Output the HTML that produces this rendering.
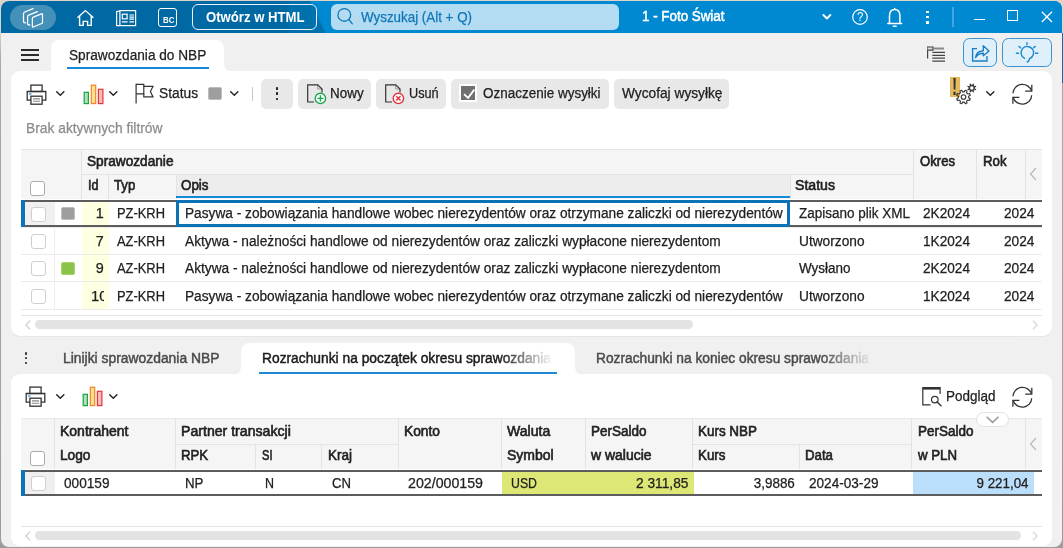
<!DOCTYPE html>
<html lang="pl"><head><meta charset="utf-8"><title>Sprawozdania do NBP</title>
<style>

html,body{margin:0;padding:0}
body{width:1063px;height:548px;overflow:hidden;background:linear-gradient(180deg,#ddd3ca 0,#ddd3ca 30px,#a9a9a9 60px,#9c9c9c 100%);position:relative;font-family:"Liberation Sans",sans-serif;font-size:14px;color:#212121}
.a{position:absolute}
.t{position:absolute;white-space:pre;line-height:20px;height:20px;-webkit-text-stroke:0.25px currentColor}
#win{will-change:transform;position:absolute;left:1px;top:1px;width:1060.5px;height:545.6px;border-radius:8px;background:#f0f0f0;overflow:hidden}
#tb{position:absolute;left:0;top:0;width:1061px;height:32.2px;background:linear-gradient(90deg,#0069a3 0,#0069a3 287px,#0071ad 289px,#0071ad 100%)}
.btn{position:absolute;background:#e8e8e8;border-radius:5px}
.panel{position:absolute;background:#fff}
.cb{position:absolute;width:13px;height:13px;border:1px solid #bdbdbd;border-radius:3px;background:#fff;box-sizing:content-box}
.hl{position:absolute;height:1px;background:#e6e6e6}
.vl{position:absolute;width:1px;background:#e2e2e2}
svg{position:absolute;overflow:visible}

</style></head>
<body>
<div class="a" style="left:1061.5px;top:33px;width:1.5px;height:50px;background:#1a6aa0"></div>
<div id="win"><div class="a" style="left:-1px;top:-1px;width:1063px;height:548px">
<div id="tb" style="left:1px;top:1px"><div class="a" style="left:0;top:0;width:100%;height:100%;background:#0088d1;clip-path:polygon(309px 0,100% 0,100% 100%,324.5px 100%)"></div></div>
<div class="a" style="left:10px;top:5px;width:46px;height:25px;border-radius:13px;background:#4490b9"></div>
<svg style="left:0px;top:0px" width="60" height="34" viewBox="0 0 60 34" fill="none" stroke="#fff" stroke-width="1.25" stroke-linejoin="round" stroke-linecap="round">
<path d="M33.1 8.6 L24.7 12 Q23.5 12.5 23.5 13.8 L23.5 22.1 L25.5 23"/>
<path d="M37.4 11.6 L28.7 15.1 Q27.6 15.6 27.6 16.9 L27.6 24.3 L29.8 25.1"/>
<path d="M32.4 18.3 Q32.4 17.5 33.2 17.2 L41.6 13.8 Q42.5 13.5 42.5 14.4 L42.5 22.4 Q42.5 23.2 41.7 23.5 L33.3 27 Q32.4 27.4 32.4 26.5 Z"/>
</svg>
<svg style="left:76px;top:9px" width="19" height="18" viewBox="0 0 19 18" fill="none" stroke="#fff" stroke-width="1.4" stroke-linejoin="miter">
<path d="M1.4 8.7 L9.4 1.6 L17.4 8.7"/><path d="M3.6 7 V16.4 H7.2 V12.4 H11.6 V16.4 H15.2 V7"/></svg>
<svg style="left:115px;top:9px" width="22" height="18" viewBox="0 0 22 18" fill="none" stroke="#fff" stroke-width="1.2">
<rect x="4.9" y="1.6" width="15.7" height="15"/><path d="M4.9 2 L1.6 2.6 V16.6 H4.9"/>
<rect x="7.3" y="5.2" width="4.8" height="4.6"/><path d="M14.4 6 H19 M14.4 8.1 H19 M14.4 10.1 H19 M6.9 12.9 H12.5 M14.4 12.9 H19" stroke-width="1.1"/></svg>
<div class="a" style="left:158px;top:8px;width:17px;height:17px;border:1.3px solid #fff;border-radius:3px"></div>
<span class="t" style="left:162.60px;transform-origin:0 50%;top:10.10px;font-size:8.5px;color:#fff;font-weight:700;transform:scaleX(0.9282);-webkit-text-stroke:0;">BC</span>
<div class="a" style="left:192px;top:4px;width:123px;height:24px;border:1px solid #e8f2f8;border-radius:6px;background:linear-gradient(90deg,#0069a3 0,#0069a3 95px,#0071ad 97px,#0071ad 100%)"></div>
<span class="t" style="left:206.00px;transform-origin:0 50%;top:7.16px;font-size:14px;color:#fff;font-weight:700;transform:scaleX(0.9381);-webkit-text-stroke:0;">Otwórz w HTML</span>
<div class="a" style="left:331px;top:4px;width:288px;height:26px;border-radius:6px;background:#b3dcf3"></div>
<svg style="left:337px;top:7px" width="18" height="19" viewBox="0 0 18 19" fill="none" stroke="#1077b8" stroke-width="1.3" stroke-linecap="round">
<circle cx="7.3" cy="7.9" r="6.35"/><path d="M11.9 12.5 L15.3 16.8"/></svg>
<span class="t" style="left:361.00px;transform-origin:0 50%;top:7.16px;font-size:14px;color:#1077b8;font-weight:400;transform:scaleX(0.9555);">Wyszukaj (Alt + Q)</span>
<span class="t" style="left:642.00px;transform-origin:0 50%;top:5.76px;font-size:14px;color:#fff;font-weight:400;transform:scaleX(0.9551);-webkit-text-stroke:0.5px #fff;">1 - Foto Świat</span>
<svg style="left:821.5px;top:13px" width="10" height="8" viewBox="0 0 10 8" fill="none" stroke="#fff" stroke-width="1.9" stroke-linecap="round" stroke-linejoin="round"><path d="M1.4 2 L4.9 5.5 L8.4 2"/></svg>
<svg style="left:852px;top:9px" width="16" height="16" viewBox="0 0 16 16" fill="none" stroke="#fff" stroke-width="1.2"><circle cx="8" cy="8" r="7.3"/></svg>
<span class="t" style="left:856.80px;transform-origin:0 50%;top:7.04px;font-size:12.5px;color:#fff;font-weight:400;transform:scaleX(0.9204);-webkit-text-stroke:0;">?</span>
<svg style="left:886.5px;top:7.5px" width="16" height="20" viewBox="0 0 16 20" fill="none" stroke="#fff" stroke-width="1.5" stroke-linejoin="round" stroke-linecap="round">
<path d="M0.8 15.4 H14.6 M2.5 15.4 V8 Q2.5 1.4 7.7 1.4 Q12.9 1.4 12.9 8 V15.4 M7.7 0.5 V1.4"/><path d="M6.3 18.3 H9.1" stroke-width="1.5"/></svg>
<div class="a" style="left:926.2px;top:10.700000000000001px;width:2.6px;height:2.6px;background:#fff;border-radius:0.5px"></div>
<div class="a" style="left:926.2px;top:15.900000000000002px;width:2.6px;height:2.6px;background:#fff;border-radius:0.5px"></div>
<div class="a" style="left:926.2px;top:21.3px;width:2.6px;height:2.6px;background:#fff;border-radius:0.5px"></div>
<div class="a" style="left:952.2px;top:7px;width:1.6px;height:19.5px;background:#45a5dd"></div>
<div class="a" style="left:973.8px;top:18.6px;width:10.8px;height:1.3px;background:#fff"></div>
<div class="a" style="left:1007.3px;top:10px;width:9.2px;height:9px;border:1.3px solid #fff;box-sizing:content-box"></div>
<svg style="left:1041.3px;top:10.5px" width="12" height="12" viewBox="0 0 12 12" stroke="#fff" stroke-width="1.3"><path d="M0.8 0.8 L11 11 M11 0.8 L0.8 11"/></svg>
<div class="a" style="left:20.8px;top:49.1px;width:18px;height:2.1px;background:#2b2b2b"></div>
<div class="a" style="left:20.8px;top:53.8px;width:18px;height:2.1px;background:#2b2b2b"></div>
<div class="a" style="left:20.8px;top:58.7px;width:18px;height:2.1px;background:#2b2b2b"></div>
<svg style="left:0;top:0" width="1063" height="100" viewBox="0 0 1063 100"><path d="M51 80 V49 Q51 39.8 60 39.8 H215 Q224 39.8 224 49 V63 Q224 70.3 230 71.2 V80 Z" fill="#fff"/></svg>
<span class="t" style="left:68.90px;transform-origin:0 50%;top:45.26px;font-size:14px;color:#212121;font-weight:400;transform:scaleX(0.9746);">Sprawozdania do NBP</span>
<div class="a" style="left:67px;top:67px;width:142px;height:2.4px;background:#1488d6"></div>
<svg style="left:927px;top:46px" width="19" height="17" viewBox="0 0 19 17" fill="none" stroke="#444" stroke-width="1.2">
<path d="M0.6 0.4 V12.6"/><path d="M0.6 1 H6 V4.2 H0.6" fill="#ddd"/><path d="M6 2.5 H17" stroke="#8a8a8a" stroke-width="2"/><path d="M5.3 6.4 H18 M5.3 9.3 H18 M5.3 12.2 H18 M5.3 15.1 H18" stroke-width="1.3"/></svg>
<div class="a" style="left:962.8px;top:38.4px;width:32px;height:26.2px;border:1px solid #3a92cf;border-radius:6.5px;background:#e0f0fa"></div>
<svg style="left:0px;top:0px" width="1063" height="70" viewBox="0 0 1063 70" fill="none" stroke="#1a7fc4" stroke-width="1.4" stroke-linejoin="miter">
<path d="M977 48.6 H972.6 V61 H987 V56"/><path d="M975.6 57.6 Q976.2 51.2 983.3 50.8 V45.8 L989 51 L983.3 55.8 V53.3 Q978 53.3 975.6 57.6 Z" stroke-linejoin="round"/></svg>
<div class="a" style="left:1001.8px;top:38.4px;width:48px;height:26.2px;border:1px solid #3a92cf;border-radius:6.5px;background:#e0f0fa"></div>
<svg style="left:0px;top:0px" width="1063" height="70" viewBox="0 0 1063 70" fill="none" stroke="#1a8ad0" stroke-width="1.4" stroke-linecap="round">
<path d="M1029.6 58.6 A6.3 6.3 0 1 0 1024.6 58.4"/><path d="M1029.6 58.6 Q1029.6 60.8 1027.2 62"/><path d="M1016.4 53.2 H1018.6 M1035.6 53.2 H1037.8 M1018.9 46.4 L1020.5 47.8 M1035.2 46.4 L1033.6 47.8 M1027 42.8 V44.6"/></svg>
<div class="panel" style="left:11px;top:71px;width:1041px;height:264.8px;border-radius:9px;box-shadow:0 0.8px 0 #e2e2e2"></div>
<div class="a" style="left:40px;top:71px;width:60px;height:12px;background:#fff"></div>
<svg style="left:25.5px;top:83.5px" width="21" height="21" viewBox="0 0 21 21" fill="none" stroke="#333" stroke-width="1.3" stroke-linejoin="miter">
<rect x="4.9" y="1.1" width="11.2" height="6.4"/><path d="M4.9 16.1 H1.2 V7.5 H19.8 V16.1 H16.1"/>
<rect x="4.9" y="12.2" width="11.2" height="8"/><path d="M7 14.9 H14 M7 17.3 H14" stroke="#888" stroke-width="1.1"/><path d="M3.1 10 H5.3" stroke="#2a8fe0" stroke-width="1.3"/></svg>
<svg style="left:55.8px;top:91.3px" width="8.6" height="5.3" viewBox="0 0 8.6 5.3" fill="none" stroke="#222" stroke-width="1.4" stroke-linecap="round" stroke-linejoin="round"><path d="M0.7 0.7 L4.3 4.3 L7.8999999999999995 0.7"/></svg>
<svg style="left:82.5px;top:83.5px" width="21" height="21" viewBox="0 0 21 21" stroke-width="1.2">
<rect x="1.2" y="8.3" width="4.2" height="11.3" fill="#b4dfb9" stroke="#12a64a"/><rect x="8.3" y="1.2" width="4.4" height="18.4" fill="#fbe08e" stroke="#f0842a"/><rect x="15.4" y="5.3" width="4.5" height="14.3" fill="#f6bcbc" stroke="#e53535"/></svg>
<svg style="left:109.2px;top:91.3px" width="8.6" height="5.3" viewBox="0 0 8.6 5.3" fill="none" stroke="#222" stroke-width="1.4" stroke-linecap="round" stroke-linejoin="round"><path d="M0.7 0.7 L4.3 4.3 L7.8999999999999995 0.7"/></svg>
<svg style="left:135px;top:83px" width="19" height="21" viewBox="0 0 19 21" fill="none" stroke="#333" stroke-width="1.2" stroke-linejoin="miter"><path d="M1.1 0.8 V20.4"/><path d="M1.1 1.3 H8.8 V10.8 H1.1"/><path d="M8.8 3.4 H18 L15.4 8.6 L18 13.9 H8.8 V10.8"/></svg>
<span class="t" style="left:158.90px;transform-origin:0 50%;top:83.16px;font-size:14px;color:#212121;font-weight:400;transform:scaleX(0.9848);">Status</span>
<div class="a" style="left:208px;top:87px;width:12px;height:11px;background:#9e9e9e;border:1px solid #bcbcbc;border-radius:2px"></div>
<svg style="left:229.8px;top:91.3px" width="8.6" height="5.3" viewBox="0 0 8.6 5.3" fill="none" stroke="#222" stroke-width="1.4" stroke-linecap="round" stroke-linejoin="round"><path d="M0.7 0.7 L4.3 4.3 L7.8999999999999995 0.7"/></svg>
<div class="a" style="left:252px;top:86.5px;width:1px;height:14px;background:#c8c8c8"></div>
<div class="btn" style="left:261px;top:79px;width:32px;height:29.7px"></div>
<div class="a" style="left:275.8px;top:87.0px;width:2.5px;height:2.5px;background:#222;border-radius:0.4px"></div>
<div class="a" style="left:275.8px;top:92.39999999999999px;width:2.5px;height:2.5px;background:#222;border-radius:0.4px"></div>
<div class="a" style="left:275.8px;top:97.8px;width:2.5px;height:2.5px;background:#222;border-radius:0.4px"></div>
<div class="btn" style="left:298px;top:79px;width:72.7px;height:29.7px"></div>
<svg style="left:307px;top:84px" width="20" height="21" viewBox="0 0 20 21" fill="none" stroke="#333" stroke-width="1.2" stroke-linejoin="miter">
<path d="M10.7 0.8 V5 H15" stroke="#999" stroke-width="1"/><path d="M7 18 H0.7 V0.8 H10.7 L15 5 V8.5"/><circle cx="13.4" cy="14.4" r="5.2" fill="#fff" stroke="#17a84a" stroke-width="1.4"/><g stroke="#17a84a" stroke-width="1.4"><path d="M13.4 11.3 V17.5 M10.3 14.4 H16.5"/></g></svg>
<span class="t" style="left:330.00px;transform-origin:0 50%;top:83.16px;font-size:14px;color:#212121;font-weight:400;transform:scaleX(0.9596);">Nowy</span>
<div class="btn" style="left:376px;top:79px;width:69.7px;height:29.7px"></div>
<svg style="left:385px;top:84px" width="20" height="21" viewBox="0 0 20 21" fill="none" stroke="#333" stroke-width="1.2" stroke-linejoin="miter">
<path d="M10.7 0.8 V5 H15" stroke="#999" stroke-width="1"/><path d="M7 18 H0.7 V0.8 H10.7 L15 5 V8.5"/><circle cx="13.4" cy="14.4" r="5.2" fill="#fff" stroke="#e8333a" stroke-width="1.4"/><g stroke="#e8333a" stroke-width="1.4"><path d="M11.3 12.3 L15.5 16.5 M15.5 12.3 L11.3 16.5"/></g></svg>
<span class="t" style="left:408.50px;transform-origin:0 50%;top:83.16px;font-size:14px;color:#212121;font-weight:400;transform:scaleX(0.9086);">Usuń</span>
<div class="btn" style="left:451px;top:79px;width:157.6px;height:29.7px"></div>
<div class="a" style="left:459px;top:84px;width:14.4px;height:14.3px;background:#707070;border:2.7px solid #fff"></div>
<svg style="left:462px;top:87px" width="14" height="14" viewBox="0 0 14 14" fill="none" stroke="#fff" stroke-width="1.8"><path d="M2 7.2 L6.1 10.9 L12.3 2.6"/></svg>
<span class="t" style="left:483.10px;transform-origin:0 50%;top:83.16px;font-size:14px;color:#212121;font-weight:400;transform:scaleX(0.9627);">Oznaczenie wysyłki</span>
<div class="btn" style="left:614px;top:79px;width:114.5px;height:29.7px"></div>
<span class="t" style="left:621.50px;transform-origin:0 50%;top:83.16px;font-size:14px;color:#212121;font-weight:400;transform:scaleX(0.9799);">Wycofaj wysyłkę</span>
<div class="a" style="left:950.1px;top:77px;width:10px;height:20px;background:#e5b95c"></div>
<span class="t" style="left:952.35px;transform-origin:0 50%;top:77.26px;font-size:23px;color:#2c3242;font-weight:700;transform:scaleX(0.6713);-webkit-text-stroke:0;">!</span>
<svg style="left:950px;top:77px" width="30" height="30" viewBox="950 77 30 30" fill="none" stroke="#333" stroke-width="1.1" stroke-linejoin="round">
<path d="M968.64 97.80 L970.27 98.78 L969.56 100.50 L967.72 100.05 L966.57 101.20 L967.03 103.04 L965.31 103.76 L964.33 102.13 L962.70 102.14 L961.72 103.77 L960.00 103.06 L960.45 101.22 L959.30 100.07 L957.46 100.53 L956.74 98.81 L958.37 97.83 L958.36 96.20 L956.73 95.22 L957.44 93.50 L959.28 93.95 L960.43 92.80 L959.97 90.96 L961.69 90.24 L962.67 91.87 L964.30 91.86 L965.28 90.23 L967.00 90.94 L966.55 92.78 L967.70 93.93 L969.54 93.47 L970.26 95.19 L968.63 96.17 Z" /><circle cx="963.5" cy="97" r="2.3"/>
<path d="M974.96 88.49 L976.35 89.19 L975.87 90.35 L974.39 89.87 L973.69 90.58 L974.17 92.06 L973.02 92.54 L972.31 91.16 L971.31 91.16 L970.61 92.55 L969.45 92.07 L969.93 90.59 L969.22 89.89 L967.74 90.37 L967.26 89.22 L968.64 88.51 L968.64 87.51 L967.25 86.81 L967.73 85.65 L969.21 86.13 L969.91 85.42 L969.43 83.94 L970.58 83.46 L971.29 84.84 L972.29 84.84 L972.99 83.45 L974.15 83.93 L973.67 85.41 L974.38 86.11 L975.86 85.63 L976.34 86.78 L974.96 87.49 Z" fill="#3a3a3a" stroke="none"/><circle cx="971.8" cy="88" r="1.75" fill="#fff" stroke="none"/></svg>
<svg style="left:986.3px;top:91.3px" width="8.6" height="5.3" viewBox="0 0 8.6 5.3" fill="none" stroke="#222" stroke-width="1.4" stroke-linecap="round" stroke-linejoin="round"><path d="M0.7 0.7 L4.3 4.3 L7.8999999999999995 0.7"/></svg>
<svg style="left:1011.6px;top:83.6px" width="21" height="21" viewBox="0 0 21 21" fill="none" stroke="#333" stroke-width="1.3" stroke-linecap="butt" stroke-linejoin="miter">
<g transform="translate(0.2 0.35) scale(0.985 0.965)"><path d="M0.8 9.3 A9.6 9.6 0 0 1 19.6 6.9"/><path d="M19.9 0.5 V7 H13.2"/><path d="M19.8 11.2 A9.6 9.6 0 0 1 1 13.6"/><path d="M0.7 20 V13.5 H7.3"/></g></svg>
<span class="t" style="left:26.00px;transform-origin:0 50%;top:118.16px;font-size:14px;color:#8c8c8c;font-weight:400;transform:scaleX(0.9857);">Brak aktywnych filtrów</span>
<div class="a" style="left:21px;top:149px;width:1021px;height:49.5px;background:#f5f5f5"></div>
<div class="a" style="left:175.5px;top:174px;width:614.5px;height:24px;background:#ededed"></div>
<div class="hl" style="left:21px;top:149px;width:1021px"></div>
<div class="hl" style="left:81px;top:174px;width:832px;background:#e4e4e4"></div>
<div class="vl" style="left:81px;top:149px;height:49.5px"></div>
<div class="vl" style="left:108.2px;top:174px;height:24.5px"></div>
<div class="vl" style="left:175.5px;top:174px;height:24.5px"></div>
<div class="vl" style="left:790px;top:174px;height:24.5px"></div>
<div class="vl" style="left:913px;top:149px;height:49.5px"></div>
<div class="vl" style="left:976.2px;top:149px;height:49.5px"></div>
<div class="vl" style="left:1025px;top:149px;height:49.5px"></div>
<span class="t" style="left:87.00px;transform-origin:0 50%;top:151.16px;font-size:14px;color:#212121;font-weight:400;transform:scaleX(0.9748);-webkit-text-stroke:0.6px #212121;">Sprawozdanie</span>
<span class="t" style="left:919.50px;transform-origin:0 50%;top:151.16px;font-size:14px;color:#212121;font-weight:400;transform:scaleX(0.9372);-webkit-text-stroke:0.6px #212121;">Okres</span>
<span class="t" style="left:982.50px;transform-origin:0 50%;top:151.16px;font-size:14px;color:#212121;font-weight:400;transform:scaleX(0.9435);-webkit-text-stroke:0.6px #212121;">Rok</span>
<span class="t" style="left:87.50px;transform-origin:0 50%;top:175.16px;font-size:14px;color:#212121;font-weight:400;transform:scaleX(0.8984);-webkit-text-stroke:0.6px #212121;">Id</span>
<span class="t" style="left:113.80px;transform-origin:0 50%;top:175.16px;font-size:14px;color:#212121;font-weight:400;transform:scaleX(0.9390);-webkit-text-stroke:0.6px #212121;">Typ</span>
<span class="t" style="left:181.00px;transform-origin:0 50%;top:175.16px;font-size:14px;color:#212121;font-weight:400;transform:scaleX(0.9550);-webkit-text-stroke:0.6px #212121;">Opis</span>
<span class="t" style="left:795.00px;transform-origin:0 50%;top:175.16px;font-size:14px;color:#212121;font-weight:400;transform:scaleX(1.0075);-webkit-text-stroke:0.6px #212121;">Status</span>
<div class="cb" style="left:29.7px;top:181.3px;border-color:#ababab"></div>
<div class="a" style="left:176px;top:196.3px;width:614px;height:1.8px;background:#128ad6"></div>
<svg style="left:1029px;top:167px" width="8" height="14" viewBox="0 0 8 14" fill="none" stroke="#b8b8b8" stroke-width="1.2"><path d="M7 1 L1.5 7 L7 13"/></svg>
<div class="a" style="left:81.5px;top:200.0px;width:27px;height:26.5px;background:#ffffe1"></div>
<div class="hl" style="left:21px;top:226.5px;width:1021px;background:#ebebeb"></div>
<div class="vl" style="left:53.8px;top:199.5px;height:27.5px;background:#eeeeee"></div>
<div class="a" style="left:24.5px;top:201.5px;width:30px;height:23.5px;background:#f0f0f0"></div>
<div class="cb" style="left:31px;top:206.55px;border-color:#cfcfcf"></div>
<div class="a" style="left:61px;top:206.95000000000002px;width:12px;height:11.5px;background:#9e9e9e;border:1px solid #bdbdbd;border-radius:2px"></div>
<span class="t" style="right:959.00px;transform-origin:100% 50%;top:203.31px;font-size:14px;color:#212121;font-weight:400;transform:scaleX(1.0261);">1</span>
<span class="t" style="left:117.00px;transform-origin:0 50%;top:203.31px;font-size:14px;color:#212121;font-weight:400;transform:scaleX(0.9209);">PZ-KRH</span>
<span class="t" style="left:185.30px;transform-origin:0 50%;top:203.31px;font-size:14px;color:#212121;font-weight:400;transform:scaleX(0.9772);">Pasywa - zobowiązania handlowe wobec nierezydentów oraz otrzymane zaliczki od nierezydentów</span>
<span class="t" style="left:799.00px;transform-origin:0 50%;top:203.31px;font-size:14px;color:#212121;font-weight:400;transform:scaleX(0.9638);">Zapisano plik XML</span>
<span class="t" style="left:923.00px;transform-origin:0 50%;top:203.31px;font-size:14px;color:#212121;font-weight:400;transform:scaleX(0.9735);">2K2024</span>
<span class="t" style="left:1004.00px;transform-origin:0 50%;top:203.31px;font-size:14px;color:#212121;font-weight:400;transform:scaleX(0.9789);">2024</span>
<div class="a" style="left:81.5px;top:227.5px;width:27px;height:26.30000000000001px;background:#ffffe1"></div>
<div class="hl" style="left:21px;top:253.8px;width:1021px;background:#ebebeb"></div>
<div class="vl" style="left:53.8px;top:227px;height:27.30000000000001px;background:#eeeeee"></div>
<div class="cb" style="left:31px;top:233.95000000000002px;border-color:#cfcfcf"></div>
<span class="t" style="right:959.00px;transform-origin:100% 50%;top:230.71px;font-size:14px;color:#212121;font-weight:400;transform:scaleX(1.0261);">7</span>
<span class="t" style="left:117.00px;transform-origin:0 50%;top:230.71px;font-size:14px;color:#212121;font-weight:400;transform:scaleX(0.9209);">AZ-KRH</span>
<span class="t" style="left:185.30px;transform-origin:0 50%;top:230.71px;font-size:14px;color:#212121;font-weight:400;transform:scaleX(0.9792);">Aktywa - należności handlowe od nierezydentów oraz zaliczki wypłacone nierezydentom</span>
<span class="t" style="left:799.00px;transform-origin:0 50%;top:230.71px;font-size:14px;color:#212121;font-weight:400;transform:scaleX(0.9788);">Utworzono</span>
<span class="t" style="left:923.00px;transform-origin:0 50%;top:230.71px;font-size:14px;color:#212121;font-weight:400;transform:scaleX(0.9735);">1K2024</span>
<span class="t" style="left:1004.00px;transform-origin:0 50%;top:230.71px;font-size:14px;color:#212121;font-weight:400;transform:scaleX(0.9789);">2024</span>
<div class="a" style="left:81.5px;top:254.8px;width:27px;height:26.599999999999966px;background:#ffffe1"></div>
<div class="hl" style="left:21px;top:281.4px;width:1021px;background:#ebebeb"></div>
<div class="vl" style="left:53.8px;top:254.3px;height:27.599999999999966px;background:#eeeeee"></div>
<div class="cb" style="left:31px;top:261.4px;border-color:#cfcfcf"></div>
<div class="a" style="left:61px;top:261.8px;width:12px;height:11.5px;background:#8bc34a;border:1px solid #a5d36e;border-radius:2px"></div>
<span class="t" style="right:959.00px;transform-origin:100% 50%;top:258.16px;font-size:14px;color:#212121;font-weight:400;transform:scaleX(1.0261);">9</span>
<span class="t" style="left:117.00px;transform-origin:0 50%;top:258.16px;font-size:14px;color:#212121;font-weight:400;transform:scaleX(0.9209);">AZ-KRH</span>
<span class="t" style="left:185.30px;transform-origin:0 50%;top:258.16px;font-size:14px;color:#212121;font-weight:400;transform:scaleX(0.9792);">Aktywa - należności handlowe od nierezydentów oraz zaliczki wypłacone nierezydentom</span>
<span class="t" style="left:799.00px;transform-origin:0 50%;top:258.16px;font-size:14px;color:#212121;font-weight:400;transform:scaleX(0.9615);">Wysłano</span>
<span class="t" style="left:923.00px;transform-origin:0 50%;top:258.16px;font-size:14px;color:#212121;font-weight:400;transform:scaleX(0.9735);">2K2024</span>
<span class="t" style="left:1004.00px;transform-origin:0 50%;top:258.16px;font-size:14px;color:#212121;font-weight:400;transform:scaleX(0.9789);">2024</span>
<div class="a" style="left:81.5px;top:282.4px;width:27px;height:26.5px;background:#ffffe1"></div>
<div class="hl" style="left:21px;top:308.9px;width:1021px;background:#ebebeb"></div>
<div class="vl" style="left:53.8px;top:281.9px;height:27.5px;background:#eeeeee"></div>
<div class="cb" style="left:31px;top:289.24999999999994px;border-color:#cfcfcf"></div>
<div class="a" style="left:81px;top:281.9px;width:22.7px;height:26.5px;overflow:hidden"><span class="t" style="left:9.50px;transform-origin:0 50%;top:4.11px;font-size:14px;color:#212121;font-weight:400;transform:scaleX(1.0592);">10</span></div>
<span class="t" style="left:117.00px;transform-origin:0 50%;top:286.01px;font-size:14px;color:#212121;font-weight:400;transform:scaleX(0.9209);">PZ-KRH</span>
<span class="t" style="left:185.30px;transform-origin:0 50%;top:286.01px;font-size:14px;color:#212121;font-weight:400;transform:scaleX(0.9772);">Pasywa - zobowiązania handlowe wobec nierezydentów oraz otrzymane zaliczki od nierezydentów</span>
<span class="t" style="left:799.00px;transform-origin:0 50%;top:286.01px;font-size:14px;color:#212121;font-weight:400;transform:scaleX(0.9788);">Utworzono</span>
<span class="t" style="left:923.00px;transform-origin:0 50%;top:286.01px;font-size:14px;color:#212121;font-weight:400;transform:scaleX(0.9735);">1K2024</span>
<span class="t" style="left:1004.00px;transform-origin:0 50%;top:286.01px;font-size:14px;color:#212121;font-weight:400;transform:scaleX(0.9789);">2024</span>
<div class="a" style="left:21px;top:199.8px;width:1021px;height:2px;background:#5c5c5c"></div>
<div class="a" style="left:21px;top:224.8px;width:1021px;height:2px;background:#5c5c5c"></div>
<div class="a" style="left:21px;top:199.8px;width:3.6px;height:27px;background:#0c73b8"></div>
<div class="a" style="left:176px;top:200px;width:614px;height:27px;border:3.9px solid #0a72b5;box-sizing:border-box"></div>
<div class="hl" style="left:21px;top:314.7px;width:1021px;background:#e4e4e4"></div>
<div class="a" style="left:35px;top:319.9px;width:658px;height:8.7px;border-radius:4.4px;background:#e3e3e3"></div>
<svg style="left:25px;top:319.5px" width="6" height="10" viewBox="0 0 6 10" fill="none" stroke="#d2d2d2" stroke-width="1.4"><path d="M5 0.8 L1 5 L5 9.2"/></svg>
<svg style="left:1032px;top:319.5px" width="6" height="10" viewBox="0 0 6 10" fill="none" stroke="#dadada" stroke-width="1.4"><path d="M1 0.8 L5 5 L1 9.2"/></svg>
<div class="a" style="left:24.7px;top:352.0px;width:2.6px;height:2.6px;background:#444;border-radius:0.5px"></div>
<div class="a" style="left:24.7px;top:356.9px;width:2.6px;height:2.6px;background:#444;border-radius:0.5px"></div>
<div class="a" style="left:24.7px;top:361.8px;width:2.6px;height:2.6px;background:#444;border-radius:0.5px"></div>
<span class="t" style="left:63.00px;transform-origin:0 50%;top:348.16px;font-size:14px;color:#4a4a4a;font-weight:400;transform:scaleX(0.9907);-webkit-text-stroke:0.45px #4a4a4a;">Linijki sprawozdania NBP</span>
<svg style="left:0;top:0" width="1063" height="548" viewBox="0 0 1063 548"><path d="M235.5 374.5 Q241 373.5 241 366 V352 Q241 343 250 343 H566 Q575 343 575 352 V366 Q575 373.5 580.5 374.5 V380 H235.5 Z" fill="#fff"/></svg>
<span class="t" style="left:262.00px;transform-origin:0 50%;top:348.16px;font-size:14px;color:#1a1a1a;font-weight:400;transform:scaleX(0.9850);-webkit-text-stroke:0.45px #1a1a1a;">Rozrachunki na początek okresu sprawozdania</span>
<div class="a" style="left:500px;top:345px;width:60px;height:26px;background:linear-gradient(90deg,rgba(255,255,255,0),rgba(255,255,255,0.95) 85%)"></div>
<div class="a" style="left:259px;top:372px;width:298px;height:2px;background:#1e88d2"></div>
<span class="t" style="left:596.00px;transform-origin:0 50%;top:348.16px;font-size:14px;color:#4a4a4a;font-weight:400;transform:scaleX(0.9826);-webkit-text-stroke:0.45px #4a4a4a;">Rozrachunki na koniec okresu sprawozdania</span>
<div class="a" style="left:820px;top:345px;width:60px;height:26px;background:linear-gradient(90deg,rgba(240,240,240,0),rgba(240,240,240,0.95) 85%)"></div>
<div class="panel" style="left:11px;top:373.8px;width:1041px;height:172px;border-radius:9px"></div>
<div class="a" style="left:230px;top:374px;width:60px;height:12px;background:#fff"></div>
<svg style="left:25.2px;top:386.2px" width="21" height="21" viewBox="0 0 21 21" fill="none" stroke="#333" stroke-width="1.3" stroke-linejoin="miter">
<rect x="4.9" y="1.1" width="11.2" height="6.4"/><path d="M4.9 16.1 H1.2 V7.5 H19.8 V16.1 H16.1"/>
<rect x="4.9" y="12.2" width="11.2" height="8"/><path d="M7 14.9 H14 M7 17.3 H14" stroke="#888" stroke-width="1.1"/><path d="M3.1 10 H5.3" stroke="#2a8fe0" stroke-width="1.3"/></svg>
<svg style="left:55.8px;top:394.3px" width="8.6" height="5.3" viewBox="0 0 8.6 5.3" fill="none" stroke="#222" stroke-width="1.4" stroke-linecap="round" stroke-linejoin="round"><path d="M0.7 0.7 L4.3 4.3 L7.8999999999999995 0.7"/></svg>
<svg style="left:82px;top:386.2px" width="21" height="21" viewBox="0 0 21 21" stroke-width="1.2">
<rect x="1.2" y="8.3" width="4.2" height="11.3" fill="#b4dfb9" stroke="#12a64a"/><rect x="8.3" y="1.2" width="4.4" height="18.4" fill="#fbe08e" stroke="#f0842a"/><rect x="15.4" y="5.3" width="4.5" height="14.3" fill="#f6bcbc" stroke="#e53535"/></svg>
<svg style="left:109.2px;top:394.3px" width="8.6" height="5.3" viewBox="0 0 8.6 5.3" fill="none" stroke="#222" stroke-width="1.4" stroke-linecap="round" stroke-linejoin="round"><path d="M0.7 0.7 L4.3 4.3 L7.8999999999999995 0.7"/></svg>
<svg style="left:922px;top:387px" width="21" height="21" viewBox="0 0 21 21" fill="none" stroke="#333" stroke-width="1.2"><path d="M8.5 17.9 H0.8 V0.6 H18.1 V7"/><path d="M0.8 1.5 H18.1" stroke-width="2.2"/><circle cx="12.8" cy="12.6" r="3.3"/><path d="M15.2 15 L19 18.8" stroke-linecap="round" stroke-width="1.4"/></svg>
<span class="t" style="left:946.00px;transform-origin:0 50%;top:386.46px;font-size:14px;color:#212121;font-weight:400;transform:scaleX(0.9632);">Podgląd</span>
<svg style="left:1011.7px;top:386.8px" width="21" height="21" viewBox="0 0 21 21" fill="none" stroke="#333" stroke-width="1.3" stroke-linecap="butt" stroke-linejoin="miter">
<g transform="translate(0.2 0.35) scale(0.985 0.965)"><path d="M0.8 9.3 A9.6 9.6 0 0 1 19.6 6.9"/><path d="M19.9 0.5 V7 H13.2"/><path d="M19.8 11.2 A9.6 9.6 0 0 1 1 13.6"/><path d="M0.7 20 V13.5 H7.3"/></g></svg>
<div class="a" style="left:21px;top:418px;width:1021px;height:50.6px;background:#f5f5f5"></div>
<div class="hl" style="left:21px;top:418px;width:1021px"></div>
<div class="hl" style="left:175.3px;top:444px;width:223px;background:#e4e4e4"></div>
<div class="hl" style="left:692px;top:444px;width:219px;background:#e4e4e4"></div>
<div class="vl" style="left:54.3px;top:418px;height:50.60000000000002px"></div>
<div class="vl" style="left:175.3px;top:418px;height:50.60000000000002px"></div>
<div class="vl" style="left:255px;top:444px;height:24.600000000000023px"></div>
<div class="vl" style="left:321.2px;top:444px;height:24.600000000000023px"></div>
<div class="vl" style="left:398px;top:418px;height:50.60000000000002px"></div>
<div class="vl" style="left:501.2px;top:418px;height:50.60000000000002px"></div>
<div class="vl" style="left:585px;top:418px;height:50.60000000000002px"></div>
<div class="vl" style="left:692px;top:418px;height:50.60000000000002px"></div>
<div class="vl" style="left:799px;top:444px;height:24.600000000000023px"></div>
<div class="vl" style="left:911.3px;top:418px;height:50.60000000000002px"></div>
<div class="vl" style="left:1025px;top:418px;height:50.60000000000002px"></div>
<span class="t" style="left:60.00px;transform-origin:0 50%;top:421.16px;font-size:14px;color:#212121;font-weight:400;transform:scaleX(1.0000);-webkit-text-stroke:0.6px #212121;">Kontrahent</span>
<span class="t" style="left:180.80px;transform-origin:0 50%;top:421.16px;font-size:14px;color:#212121;font-weight:400;transform:scaleX(1.0079);-webkit-text-stroke:0.6px #212121;">Partner transakcji</span>
<span class="t" style="left:404.00px;transform-origin:0 50%;top:421.16px;font-size:14px;color:#212121;font-weight:400;transform:scaleX(0.9838);-webkit-text-stroke:0.6px #212121;">Konto</span>
<span class="t" style="left:506.80px;transform-origin:0 50%;top:421.16px;font-size:14px;color:#212121;font-weight:400;transform:scaleX(1.0032);-webkit-text-stroke:0.6px #212121;">Waluta</span>
<span class="t" style="left:591.00px;transform-origin:0 50%;top:421.16px;font-size:14px;color:#212121;font-weight:400;transform:scaleX(0.9636);-webkit-text-stroke:0.6px #212121;">PerSaldo</span>
<span class="t" style="left:698.00px;transform-origin:0 50%;top:421.16px;font-size:14px;color:#212121;font-weight:400;transform:scaleX(0.9598);-webkit-text-stroke:0.6px #212121;">Kurs NBP</span>
<span class="t" style="left:918.00px;transform-origin:0 50%;top:421.16px;font-size:14px;color:#212121;font-weight:400;transform:scaleX(0.9636);-webkit-text-stroke:0.6px #212121;">PerSaldo</span>
<span class="t" style="left:60.00px;transform-origin:0 50%;top:444.76px;font-size:14px;color:#212121;font-weight:400;transform:scaleX(0.9789);-webkit-text-stroke:0.6px #212121;">Logo</span>
<span class="t" style="left:180.80px;transform-origin:0 50%;top:444.76px;font-size:14px;color:#212121;font-weight:400;transform:scaleX(0.9445);-webkit-text-stroke:0.6px #212121;">RPK</span>
<span class="t" style="left:261.50px;transform-origin:0 50%;top:444.76px;font-size:14px;color:#212121;font-weight:400;transform:scaleX(0.7934);-webkit-text-stroke:0.6px #212121;">SI</span>
<span class="t" style="left:327.50px;transform-origin:0 50%;top:444.76px;font-size:14px;color:#212121;font-weight:400;transform:scaleX(0.9636);-webkit-text-stroke:0.6px #212121;">Kraj</span>
<span class="t" style="left:506.80px;transform-origin:0 50%;top:444.76px;font-size:14px;color:#212121;font-weight:400;transform:scaleX(1.0003);-webkit-text-stroke:0.6px #212121;">Symbol</span>
<span class="t" style="left:591.00px;transform-origin:0 50%;top:444.76px;font-size:14px;color:#212121;font-weight:400;transform:scaleX(0.9967);-webkit-text-stroke:0.6px #212121;">w walucie</span>
<span class="t" style="left:698.00px;transform-origin:0 50%;top:444.76px;font-size:14px;color:#212121;font-weight:400;transform:scaleX(0.9550);-webkit-text-stroke:0.6px #212121;">Kurs</span>
<span class="t" style="left:805.00px;transform-origin:0 50%;top:444.76px;font-size:14px;color:#212121;font-weight:400;transform:scaleX(0.9466);-webkit-text-stroke:0.6px #212121;">Data</span>
<span class="t" style="left:918.00px;transform-origin:0 50%;top:444.76px;font-size:14px;color:#212121;font-weight:400;transform:scaleX(0.9458);-webkit-text-stroke:0.6px #212121;">w PLN</span>
<div class="cb" style="left:29.8px;top:450.6px;border-color:#ababab"></div>
<svg style="left:1029px;top:437px" width="8" height="14" viewBox="0 0 8 14" fill="none" stroke="#b8b8b8" stroke-width="1.2"><path d="M7 1 L1.5 7 L7 13"/></svg>
<div class="a" style="left:976.3px;top:412.2px;width:31px;height:13px;border:1px solid #e2e2e2;border-radius:8px;background:#fff"></div>
<svg style="left:985.9px;top:416.3px" width="14" height="8" viewBox="0 0 14 8" fill="none" stroke="#9a9a9a" stroke-width="1.5"><path d="M0.6 0.8 L6.6 6.4 L12.6 0.8"/></svg>
<div class="a" style="left:24.5px;top:471.5px;width:30px;height:23px;background:#efefef"></div>
<div class="a" style="left:501.7px;top:471px;width:192.3px;height:24px;background:#dce775"></div>
<div class="a" style="left:913px;top:471px;width:121px;height:24px;background:#bbdefb"></div>
<div class="a" style="left:21px;top:469.5px;width:1021px;height:2.2px;background:#5c5c5c"></div>
<div class="a" style="left:21px;top:494px;width:1021px;height:2.4px;background:#5c5c5c"></div>
<div class="a" style="left:21px;top:469.7px;width:3.6px;height:26.7px;background:#0c73b8"></div>
<div class="cb" style="left:30.5px;top:475.7px;border-color:#cfcfcf"></div>
<span class="t" style="left:64.00px;transform-origin:0 50%;top:473.16px;font-size:14px;color:#212121;font-weight:400;transform:scaleX(0.9739);">000159</span>
<span class="t" style="left:185.00px;transform-origin:0 50%;top:473.16px;font-size:14px;color:#212121;font-weight:400;transform:scaleX(0.9510);">NP</span>
<span class="t" style="left:265.00px;transform-origin:0 50%;top:473.16px;font-size:14px;color:#212121;font-weight:400;transform:scaleX(0.8889);">N</span>
<span class="t" style="left:331.50px;transform-origin:0 50%;top:473.16px;font-size:14px;color:#212121;font-weight:400;transform:scaleX(0.9390);">CN</span>
<span class="t" style="left:407.50px;transform-origin:0 50%;top:473.16px;font-size:14px;color:#212121;font-weight:400;transform:scaleX(1.0139);">202/000159</span>
<span class="t" style="left:511.00px;transform-origin:0 50%;top:473.16px;font-size:14px;color:#212121;font-weight:400;transform:scaleX(0.8795);">USD</span>
<span class="t" style="right:374.50px;transform-origin:100% 50%;top:473.16px;font-size:14px;color:#212121;font-weight:400;transform:scaleX(0.9819);">2 311,85</span>
<span class="t" style="right:268.50px;transform-origin:100% 50%;top:473.16px;font-size:14px;color:#212121;font-weight:400;transform:scaleX(0.9573);">3,9886</span>
<span class="t" style="left:808.50px;transform-origin:0 50%;top:473.16px;font-size:14px;color:#212121;font-weight:400;transform:scaleX(0.9703);">2024-03-29</span>
<span class="t" style="right:34.50px;transform-origin:100% 50%;top:473.16px;font-size:14px;color:#212121;font-weight:400;transform:scaleX(0.9541);">9 221,04</span>
<div class="hl" style="left:21px;top:526px;width:1021px;background:#e4e4e4"></div>
<div class="a" style="left:35px;top:530.9px;width:985.5px;height:8.7px;border-radius:4.4px;background:#e3e3e3"></div>
<svg style="left:25px;top:530.5px" width="6" height="10" viewBox="0 0 6 10" fill="none" stroke="#d2d2d2" stroke-width="1.4"><path d="M5 0.8 L1 5 L5 9.2"/></svg>
<svg style="left:1032px;top:530.5px" width="6" height="10" viewBox="0 0 6 10" fill="none" stroke="#dadada" stroke-width="1.4"><path d="M1 0.8 L5 5 L1 9.2"/></svg>
</div></div>
</body></html>
